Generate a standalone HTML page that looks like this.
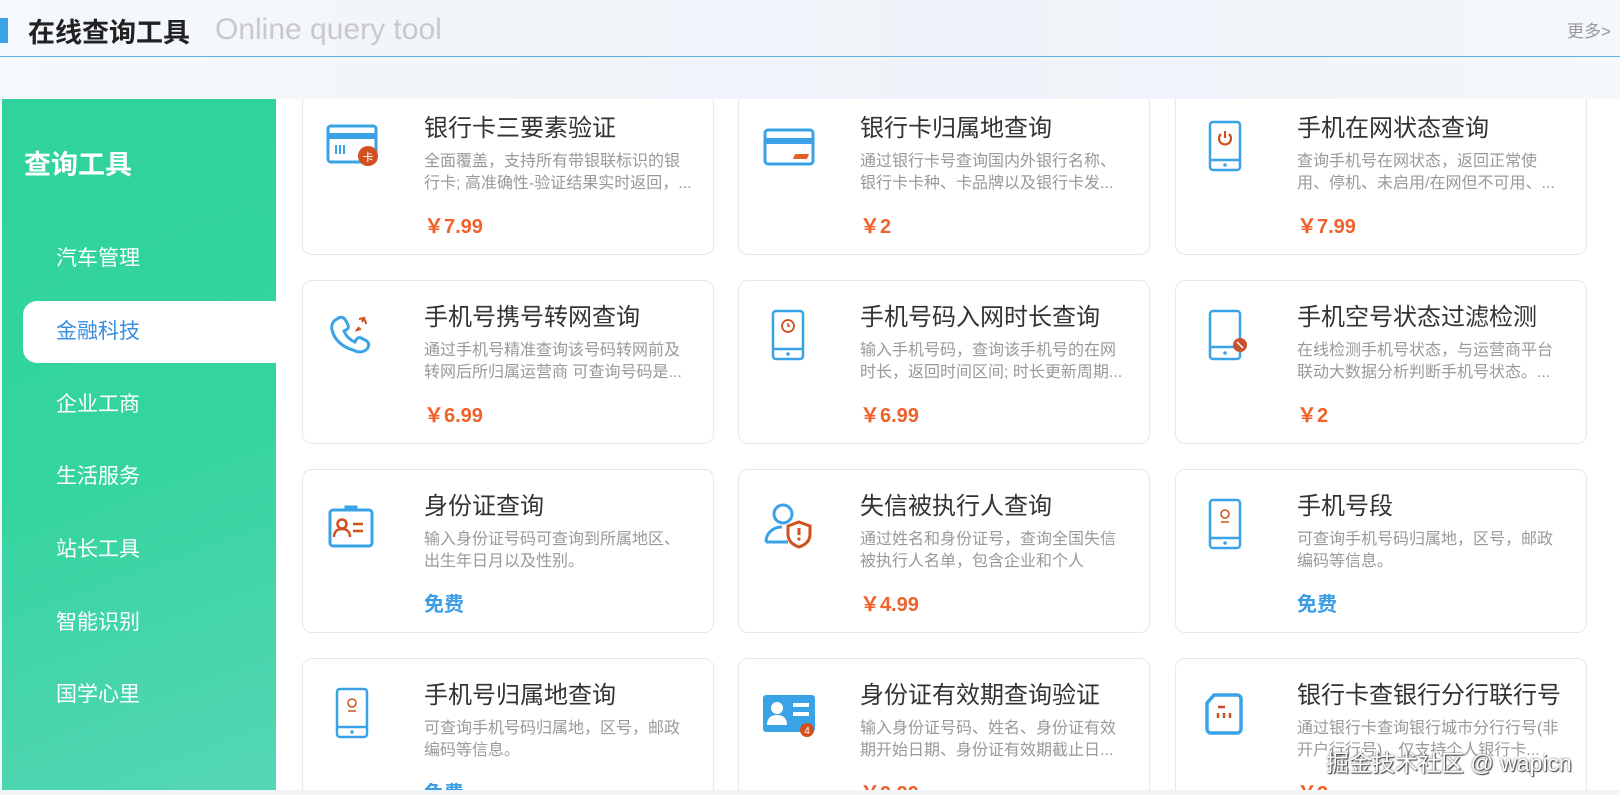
<!DOCTYPE html>
<html><head><meta charset="utf-8"><style>
*{margin:0;padding:0;box-sizing:border-box}
body{width:1620px;height:795px;overflow:hidden;background:#f4f7fb;font-family:"Liberation Sans","Noto Sans CJK SC",sans-serif;position:relative}
.hdr{position:absolute;left:0;top:0;width:1620px;height:99px;background:linear-gradient(90deg,#f5f8fc,#eef3f9 60%,#f4f7fb)}
.bar{position:absolute;left:0;top:18px;width:8px;height:25px;background:#3aa3e8}
.t1{position:absolute;left:28px;top:11px;font-size:27px;font-weight:bold;color:#222}
.t2{position:absolute;left:215px;top:13px;font-size:30px;color:#c9c9c9}
.more{position:absolute;left:1567px;top:17px;font-size:17px;color:#999}
.line{position:absolute;left:0;top:56px;width:1620px;height:1px;background:#5fb1e0}
.side{position:absolute;left:2px;top:99px;width:274px;height:691px;background:linear-gradient(160deg,#2fd39b,#34d49e 50%,#55d6b5)}
.side h2{position:absolute;left:22px;top:44px;color:#fff;font-size:27px;font-weight:bold}
.mi{position:absolute;left:54px;color:#fff;font-size:21px;line-height:30px}
.act{position:absolute;left:21px;top:202px;width:253px;height:62px;background:#fff;border-radius:14px 0 0 14px}
.main{position:absolute;left:276px;top:99px;width:1344px;height:691px;overflow:hidden;background:#fff}
.card{position:absolute;width:412px;height:164px;border:1px solid #e8e8e8;border-radius:10px;background:#fff}
.card svg{position:absolute;left:22px;top:26px}
.ct{position:absolute;left:121px;top:16px;font-size:24px;color:#333;white-space:nowrap}
.cd{position:absolute;left:121px;top:59px;width:266px;font-size:16px;line-height:22px;color:#999;height:44px;overflow:hidden}
.cp{position:absolute;left:121px;top:118px;font-size:20px;font-weight:bold;color:#f0622c}
.free{color:#3a9de6}
.wm{position:absolute;left:1326px;top:744px;font-size:23px;color:#fff;text-shadow:0 0 2px #555,1px 1px 1px #333;white-space:nowrap}
.bot{position:absolute;left:0;top:790px;width:1620px;height:5px;background:#eef4f8}
</style></head><body>
<div class="hdr"><div class="bar"></div><div class="t1">在线查询工具</div><div class="t2">Online query tool</div><div class="more">更多&gt;</div><div class="line"></div></div>
<div class="side">
<h2>查询工具</h2>
<div class="act"></div>
<div class="mi" style="top:145px">汽车管理</div>
<div class="mi" style="top:218px;color:#3a8fe0">金融科技</div>
<div class="mi" style="top:291px">企业工商</div>
<div class="mi" style="top:363px">生活服务</div>
<div class="mi" style="top:436px">站长工具</div>
<div class="mi" style="top:509px">智能识别</div>
<div class="mi" style="top:581px">国学心里</div>
</div>
<div class="main">
<div class="card" style="left:26px;top:-8px"><svg width="56" height="56" viewBox="0 0 56 56"><rect x="3" y="8" width="48" height="36" rx="3" fill="none" stroke="#3aa3e8" stroke-width="3"/><rect x="3" y="15" width="48" height="6" fill="#3aa3e8"/><path d="M11 27v9M15 27v9M19 27v9" stroke="#3aa3e8" stroke-width="2"/><circle cx="43" cy="38" r="10" fill="#d2501f"/><text x="43" y="43" font-size="11" fill="#fff" text-anchor="middle">卡</text></svg><div class="ct">银行卡三要素验证</div><div class="cd" style="width:290px;white-space:nowrap">全面覆盖，支持所有带银联标识的银<br>行卡; 高准确性-验证结果实时返回，...</div><div class="cp">￥7.99</div></div>
<div class="card" style="left:462px;top:-8px"><svg width="56" height="56" viewBox="0 0 56 56"><rect x="4" y="12" width="48" height="34" rx="3" fill="none" stroke="#3aa3e8" stroke-width="3"/><rect x="4" y="20" width="48" height="6" fill="#3aa3e8"/><path d="M34 36h14l-2 5h-14z" fill="#e2602a"/></svg><div class="ct">银行卡归属地查询</div><div class="cd">通过银行卡号查询国内外银行名称、银行卡卡种、卡品牌以及银行卡发...</div><div class="cp">￥2</div></div>
<div class="card" style="left:899px;top:-8px"><svg width="56" height="56" viewBox="0 0 56 56"><rect x="12" y="4" width="30" height="48" rx="3" fill="none" stroke="#3aa3e8" stroke-width="2.5"/><path d="M12 42h30" stroke="#3aa3e8" stroke-width="2.5"/><circle cx="27" cy="47" r="1.8" fill="#3aa3e8"/><path d="M23 16a6 6 0 1 0 8 0M27 13v7" fill="none" stroke="#d2501f" stroke-width="2.2"/></svg><div class="ct">手机在网状态查询</div><div class="cd">查询手机号在网状态，返回正常使用、停机、未启用/在网但不可用、...</div><div class="cp">￥7.99</div></div>
<div class="card" style="left:26px;top:181px"><svg width="56" height="56" viewBox="0 0 56 56"><path d="M12 12c4-3 7-2 9 2l2 4c1 2 0 4-2 5l-2 1c2 5 6 9 11 11l1-2c1-2 3-3 5-2l4 2c4 2 5 5 2 9-3 3-8 4-14 1C17 40 9 32 7 23c-1-5 1-9 5-11z" fill="none" stroke="#3aa3e8" stroke-width="3"/><path d="M34 12l5-1-2 4M38 11c2 2 3 4 3 6M36 22l-4 1 2-3" stroke="#d2501f" stroke-width="2" fill="none"/></svg><div class="ct">手机号携号转网查询</div><div class="cd">通过手机号精准查询该号码转网前及转网后所归属运营商 可查询号码是...</div><div class="cp">￥6.99</div></div>
<div class="card" style="left:462px;top:181px"><svg width="56" height="56" viewBox="0 0 56 56"><rect x="12" y="4" width="30" height="48" rx="3" fill="none" stroke="#3aa3e8" stroke-width="2.5"/><path d="M12 42h30" stroke="#3aa3e8" stroke-width="2.5"/><circle cx="27" cy="47" r="1.8" fill="#3aa3e8"/><circle cx="27" cy="19" r="6" fill="none" stroke="#d2501f" stroke-width="1.8"/><path d="M27 16v3h2" stroke="#d2501f" stroke-width="1.5" fill="none"/></svg><div class="ct">手机号码入网时长查询</div><div class="cd">输入手机号码，查询该手机号的在网时长，返回时间区间; 时长更新周期...</div><div class="cp">￥6.99</div></div>
<div class="card" style="left:899px;top:181px"><svg width="56" height="56" viewBox="0 0 56 56"><rect x="12" y="4" width="30" height="48" rx="3" fill="none" stroke="#3aa3e8" stroke-width="2.5"/><path d="M12 40h30" stroke="#3aa3e8" stroke-width="2.5"/><circle cx="27" cy="46" r="1.8" fill="#3aa3e8"/><circle cx="42" cy="38" r="7" fill="#c8502a"/><path d="M39 35l6 6" stroke="#fff" stroke-width="1.5"/></svg><div class="ct">手机空号状态过滤检测</div><div class="cd">在线检测手机号状态，与运营商平台联动大数据分析判断手机号状态。...</div><div class="cp">￥2</div></div>
<div class="card" style="left:26px;top:370px"><svg width="56" height="56" viewBox="0 0 56 56"><rect x="5" y="14" width="42" height="36" rx="3" fill="none" stroke="#3aa3e8" stroke-width="3"/><path d="M21 14v-3h10v3" fill="none" stroke="#3aa3e8" stroke-width="3"/><circle cx="17" cy="28" r="4.5" fill="none" stroke="#d2501f" stroke-width="2.5"/><path d="M9 41c0-6 4-8 8-8s8 2 8 8M28 28h10M28 35h10" stroke="#d2501f" stroke-width="2.5" fill="none"/></svg><div class="ct">身份证查询</div><div class="cd">输入身份证号码可查询到所属地区、出生年日月以及性别。</div><div class="cp free">免费</div></div>
<div class="card" style="left:462px;top:370px"><svg width="56" height="56" viewBox="0 0 56 56"><circle cx="22" cy="18" r="9" fill="none" stroke="#3aa3e8" stroke-width="3"/><path d="M5 46c0-9 7-15 16-15" fill="none" stroke="#3aa3e8" stroke-width="3"/><path d="M5 46h22" stroke="#3aa3e8" stroke-width="3"/><path d="M38 26l11 4v8c0 7-5 11-11 13-6-2-11-6-11-13v-8z" fill="none" stroke="#d2501f" stroke-width="3"/><path d="M38 32v7" stroke="#d2501f" stroke-width="3"/><circle cx="38" cy="43" r="1.6" fill="#d2501f"/></svg><div class="ct">失信被执行人查询</div><div class="cd">通过姓名和身份证号，查询全国失信被执行人名单，包含企业和个人</div><div class="cp">￥4.99</div></div>
<div class="card" style="left:899px;top:370px"><svg width="56" height="56" viewBox="0 0 56 56"><rect x="12" y="4" width="30" height="48" rx="3" fill="none" stroke="#3aa3e8" stroke-width="2.5"/><path d="M12 42h30" stroke="#3aa3e8" stroke-width="2.5"/><circle cx="27" cy="47" r="1.8" fill="#3aa3e8"/><circle cx="27" cy="18" r="4" fill="none" stroke="#d2501f" stroke-width="1.5"/><path d="M23 26h8" stroke="#d2501f" stroke-width="1.5"/></svg><div class="ct">手机号段</div><div class="cd">可查询手机号码归属地，区号，邮政编码等信息。</div><div class="cp free">免费</div></div>
<div class="card" style="left:26px;top:559px"><svg width="56" height="56" viewBox="0 0 56 56"><rect x="12" y="4" width="30" height="48" rx="3" fill="none" stroke="#3aa3e8" stroke-width="2.5"/><path d="M12 42h30" stroke="#3aa3e8" stroke-width="2.5"/><circle cx="27" cy="47" r="1.8" fill="#3aa3e8"/><circle cx="27" cy="18" r="4" fill="none" stroke="#d2501f" stroke-width="1.5"/><path d="M23 26h8" stroke="#d2501f" stroke-width="1.5"/></svg><div class="ct">手机号归属地查询</div><div class="cd">可查询手机号码归属地，区号，邮政编码等信息。</div><div class="cp free">免费</div></div>
<div class="card" style="left:462px;top:559px"><svg width="56" height="56" viewBox="0 0 56 56"><rect x="2" y="10" width="52" height="37" rx="3" fill="#3aa3e8"/><circle cx="16" cy="23" r="6" fill="#fff"/><path d="M6 40c0-8 5-10 10-10s10 2 10 10z" fill="#fff"/><path d="M32 20h16M32 29h16" stroke="#fff" stroke-width="4"/><circle cx="46" cy="45" r="7" fill="#d2501f"/><text x="46" y="49" font-size="10" fill="#fff" text-anchor="middle">4</text></svg><div class="ct">身份证有效期查询验证</div><div class="cd">输入身份证号码、姓名、身份证有效期开始日期、身份证有效期截止日...</div><div class="cp">￥9.99</div></div>
<div class="card" style="left:899px;top:559px"><svg width="56" height="56" viewBox="0 0 56 56"><path d="M16 10h23a4 4 0 0 1 4 4v30a4 4 0 0 1-4 4H13a4 4 0 0 1-4-4V18z" fill="none" stroke="#3aa3e8" stroke-width="3.5"/><path d="M20 22h7M20 28v5M26 28v5M32 28v5" stroke="#c8502a" stroke-width="2.5"/></svg><div class="ct">银行卡查银行分行联行号</div><div class="cd">通过银行卡查询银行城市分行行号(非开户行行号)，仅支持个人银行卡...</div><div class="cp">￥2</div></div>
</div>
<div class="wm">掘金技术社区 @ wapicn</div>
<div class="bot"></div>
</body></html>
